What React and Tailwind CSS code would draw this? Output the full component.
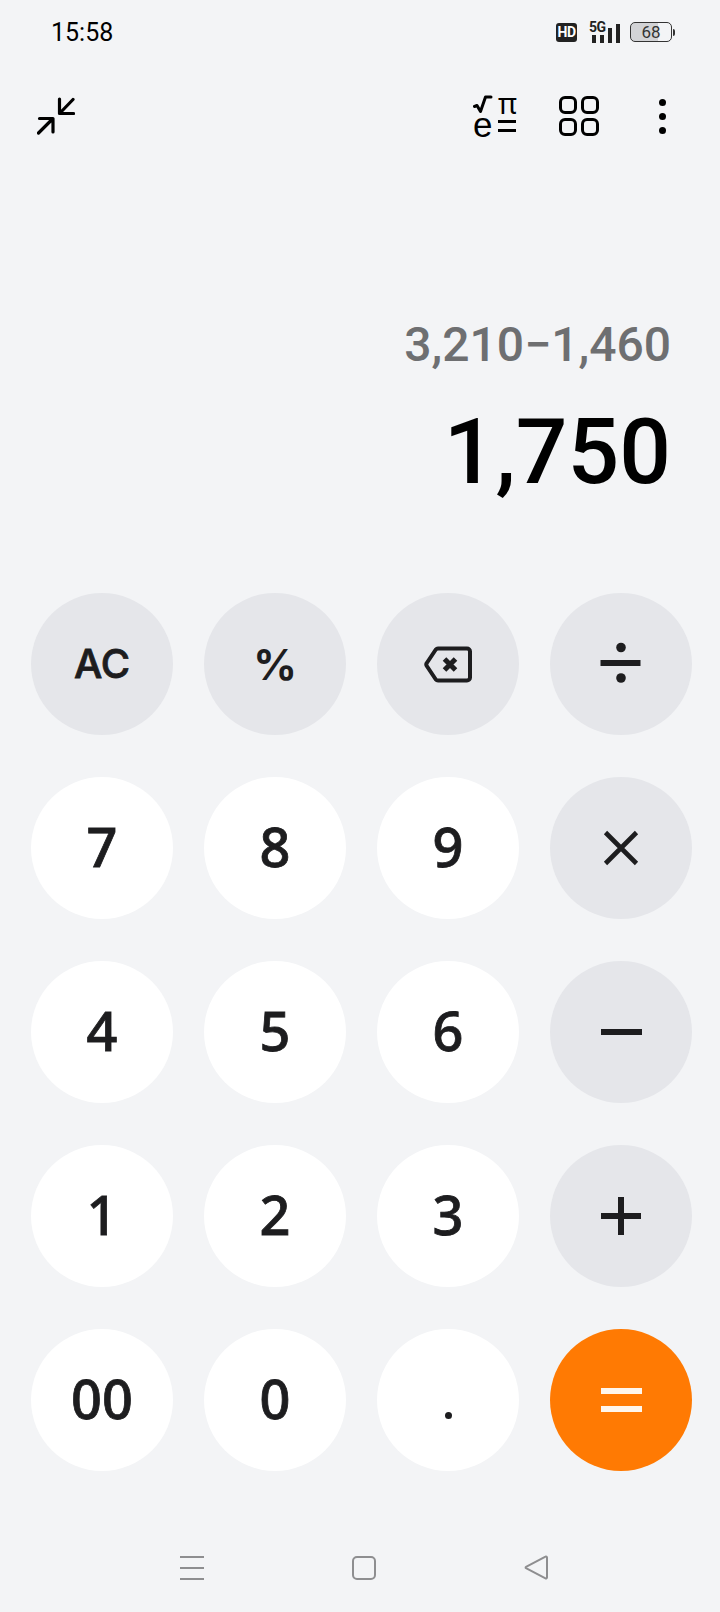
const keys = [
  { label: "AC", kind: "op", className: "font-['Inter',sans-serif] text-[40px] font-medium [-webkit-text-stroke:0.8px_#1d1d1f]" },
  { label: "%", kind: "op", className: "font-['Inter',sans-serif] text-[43px] font-bold" },
  { icon: "back", kind: "op" },
  { icon: "div", kind: "op" },
  { label: "7" },
  { label: "8" },
  { label: "9" },
  { icon: "times", kind: "op" },
  { label: "4" },
  { label: "5" },
  { label: "6" },
  { icon: "minus", kind: "op" },
  { label: "1" },
  { label: "2" },
  { label: "3" },
  { icon: "plus", kind: "op" },
  { label: "00" },
  { label: "0" },
  { icon: "dot" },
  { icon: "equals", kind: "eq" },
];

function KeyIcon({ name }) {
  if (name === "back") {
    return (
      <svg width="48" height="37" viewBox="0 0 48 37" fill="none" stroke="#1d1d1f" strokeWidth="4" strokeLinejoin="round" strokeLinecap="round">
        <path d="M14 2.5H43a3 3 0 0 1 3 3v26a3 3 0 0 1-3 3H14a3 3 0 0 1-2.2-1L2.8 20a2.6 2.6 0 0 1 0-3L11.8 3.5a3 3 0 0 1 2.2-1Z" />
        <path d="M20.5 13l11 11M31.5 13l-11 11" strokeWidth="5" strokeLinecap="butt" />
      </svg>
    );
  }
  if (name === "div") {
    return (
      <svg className="-mt-[2px]" width="42" height="42" viewBox="0 0 42 42" fill="#1d1d1f">
        <circle cx="21" cy="5.5" r="4.8" />
        <rect x="0.5" y="18" width="40" height="6" />
        <circle cx="21" cy="36" r="4.8" />
      </svg>
    );
  }
  if (name === "times") {
    return (
      <svg width="36" height="36" viewBox="0 0 36 36" stroke="#1d1d1f" strokeWidth="4.6">
        <path d="M2.5 2.5l31 31M33.5 2.5l-31 31" />
      </svg>
    );
  }
  if (name === "minus") {
    return <div className="h-[6px] w-[41px] bg-[#1d1d1f]" />;
  }
  if (name === "plus") {
    return (
      <svg width="40" height="40" viewBox="0 0 40 40" fill="#1d1d1f">
        <rect x="0" y="17" width="40" height="6" />
        <rect x="17" y="1" width="6" height="38" />
      </svg>
    );
  }
  if (name === "dot") {
    return <div className="mt-[30px] size-[7px] rounded-full bg-[#1d1d1f]" />;
  }
  return (
    <div className="flex flex-col gap-[12px]">
      <div className="h-[6px] w-[41px] bg-[#fff6ec]" />
      <div className="h-[6px] w-[41px] bg-[#fff6ec]" />
    </div>
  );
}

function Key({ k }) {
  const bg = k.kind === "op" ? "bg-[#e5e6ea]" : k.kind === "eq" ? "bg-[#ff7a03]" : "bg-white";
  return (
    <div className={`flex size-[142px] items-center justify-center rounded-full ${bg}`}>
      {k.icon ? (
        <KeyIcon name={k.icon} />
      ) : (
        <span className={k.className || "-mt-[4px] font-['Noto_Sans',sans-serif] text-[54px] font-medium [-webkit-text-stroke:0.8px_#1d1d1f]"}>{k.label}</span>
      )}
    </div>
  );
}

function MathIcon() {
  return (
    <div className="flex w-[44px] flex-col gap-[2px] text-black">
      <div className="flex h-[20px] items-start">
        <svg width="20" height="20" viewBox="0 0 20 20" fill="none" stroke="black" strokeLinecap="round" strokeLinejoin="round">
          <path d="M1.5 11.5l2.5-1 3.5 6L12.5 2H18" strokeWidth="3" />
        </svg>
        <span className="ml-[5px] h-[20px] font-['Noto_Sans',sans-serif] text-[29px] leading-[16px]">π</span>
      </div>
      <div className="flex h-[20px] items-start">
        <span className="-mt-[3px] h-[20px] w-[25px] font-['Liberation_Sans',sans-serif] text-[35px] leading-[22px]">e</span>
        <div className="flex flex-col gap-[6px] pt-[3px]">
          <div className="h-[3px] w-[18px] bg-black" />
          <div className="h-[3px] w-[18px] bg-black" />
        </div>
      </div>
    </div>
  );
}

export default function App() {
  return (
    <div className="flex h-[1612px] w-[720px] flex-col overflow-hidden bg-[#f3f4f6] font-['Roboto',sans-serif] text-[#1d1d1f]">
      <div className="flex h-[64px] items-center justify-between pt-[2px] pr-[45px] pl-[51px]">
        <span className="text-[25px] text-black">15:58</span>
        <div className="-mt-[2px] flex items-center">
          <span className="flex h-[19px] w-[21px] items-center justify-center rounded-[3px] bg-[#222] text-[14px] leading-none font-bold tracking-[-0.5px] text-white">
            HD
          </span>
          <div className="relative ml-[12px] flex h-[21px] w-[31px] items-end gap-[4px] pl-[3px]">
            <span className="absolute -top-[2px] left-0 text-[14px] leading-none font-bold tracking-[-0.5px] text-[#222]">5G</span>
            <div className="h-[8px] w-[4px] bg-[#222]" />
            <div className="h-[8px] w-[4px] bg-[#222]" />
            <div className="h-[15px] w-[4px] bg-[#222]" />
            <div className="h-[19px] w-[4px] bg-[#222]" />
          </div>
          <div className="ml-[10px] flex h-[20px] w-[42px] items-center justify-center rounded-[5px] border border-[#333] bg-[linear-gradient(to_right,#d2d3d6_68%,transparent_68%)] text-[17px] leading-none text-[#333]">
            68
          </div>
          <div className="ml-[1px] h-[7px] w-[2px] rounded-r bg-[#333]" />
        </div>
      </div>

      <div className="flex h-[104px] items-center pr-[54px] pl-[37px]">
        <svg width="38" height="38" viewBox="0 0 38 38" fill="none" stroke="black" strokeWidth="3.2" strokeLinecap="round" strokeLinejoin="round">
          <path d="M22.5 2v14.5h14M23 16L36 2.5" />
          <path d="M1.5 36L15.5 22M2.5 21.5h13.5V35" />
        </svg>
        <div className="ml-auto">
          <MathIcon />
        </div>
        <div className="ml-[42px] grid grid-cols-2 gap-[4px]">
          <div className="size-[18px] rounded-[6px] border-[3px] border-black" />
          <div className="size-[18px] rounded-[6px] border-[3px] border-black" />
          <div className="size-[18px] rounded-[6px] border-[3px] border-black" />
          <div className="size-[18px] rounded-[6px] border-[3px] border-black" />
        </div>
        <div className="ml-[60px] flex flex-col gap-[7px]">
          <div className="size-[7px] rounded-full bg-black" />
          <div className="size-[7px] rounded-full bg-black" />
          <div className="size-[7px] rounded-full bg-black" />
        </div>
      </div>

      <div className="flex h-[425px] flex-col items-end pt-[149px] pr-[49px]">
        <div className="text-[48px] leading-[56px] font-medium text-[#6e6f71]">3,210−1,460</div>
        <div className="mt-[24px] text-[91px] leading-[110px] font-medium text-black">1,750</div>
      </div>

      <div className="grid w-[720px] grid-cols-[repeat(4,142px)] gap-x-[31px] gap-y-[42px] pl-[31px]">
        {keys.map((k, i) => (
          <Key key={i} k={k} />
        ))}
      </div>

      <div className="mt-[84px] flex items-center pl-[180px]">
        <div className="flex w-[24px] flex-col gap-[9px]">
          <div className="h-[2px] bg-[#8e8e90]" />
          <div className="h-[2px] bg-[#8e8e90]" />
          <div className="h-[2px] bg-[#8e8e90]" />
        </div>
        <div className="ml-[148px] size-[24px] rounded-[5px] border-2 border-[#8e8e90]" />
        <svg className="ml-[148px]" width="25" height="25" viewBox="0 0 25 25" fill="none" stroke="#8e8e90" strokeWidth="2" strokeLinejoin="round">
          <path d="M23 2.5v20a1 1 0 0 1-1.5.8L2 13.2a.8.8 0 0 1 0-1.4L21.5 1.7a1 1 0 0 1 1.5.8Z" />
        </svg>
      </div>
    </div>
  );
}
